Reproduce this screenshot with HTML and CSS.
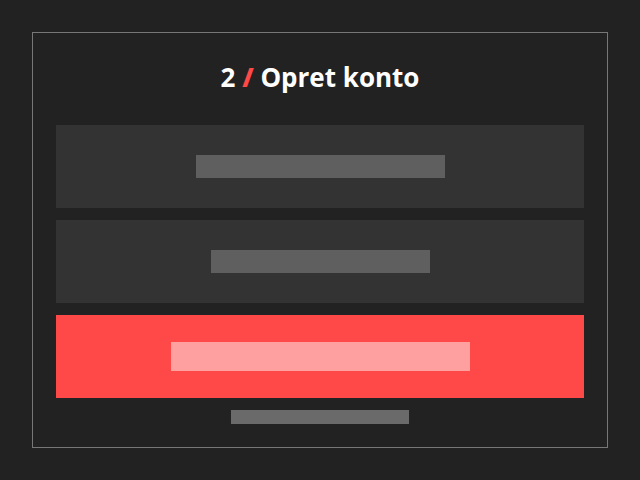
FILE: index.html
```html
<!DOCTYPE html>
<html lang="en">
<head>
  <meta charset="UTF-8" />
  <title>Opret konto</title>
  <link rel="stylesheet" href="styles.css">
</head>
<body>

<div class="signup">
  <h1 class="signup-title">2 <span class="slash">/</span> Opret konto</h1>

  <div class="field">
    <div class="skeleton wide"></div>
  </div>
  <div class="field">
    <div class="skeleton narrow"></div>
  </div>
  <div class="field primary">
    <div class="skeleton label"></div>
  </div>

  <div class="skeleton footer-note"></div>
</div>

</body>
</html>
```

FILE: styles.css
```css
body {
  font-family: 'Open Sans', 'Noto Sans', sans-serif;
  background-color: #222222;
  color: white;
  margin: 0;
  padding: 32px;
}

.signup {
  border: 1px solid #777777;
  padding: 0 23px 23px;
  display: flex;
  flex-direction: column;
  gap: 12px;
}

.signup-title {
  margin: 0 0 -8px;
  height: 88px;
  line-height: 88px;
  font-size: 26px;
  font-weight: 700;
  text-align: center;
}

.slash {
  color: #ff4848;
  font-weight: 800;
}

.field {
  height: 83px;
  background-color: #333333;
  display: flex;
  align-items: center;
  justify-content: center;
}

.field.primary {
  background-color: #ff4848;
}

.skeleton {
  background-color: #5f5f5f;
  height: 23px;
}

.skeleton.wide {
  width: 249px;
}

.skeleton.narrow {
  width: 219px;
}

.skeleton.label {
  width: 299px;
  height: 29px;
  background-color: #ffa0a0;
}

.skeleton.footer-note {
  width: 178px;
  height: 14px;
  background-color: #6a6a6a;
  align-self: center;
}
```
